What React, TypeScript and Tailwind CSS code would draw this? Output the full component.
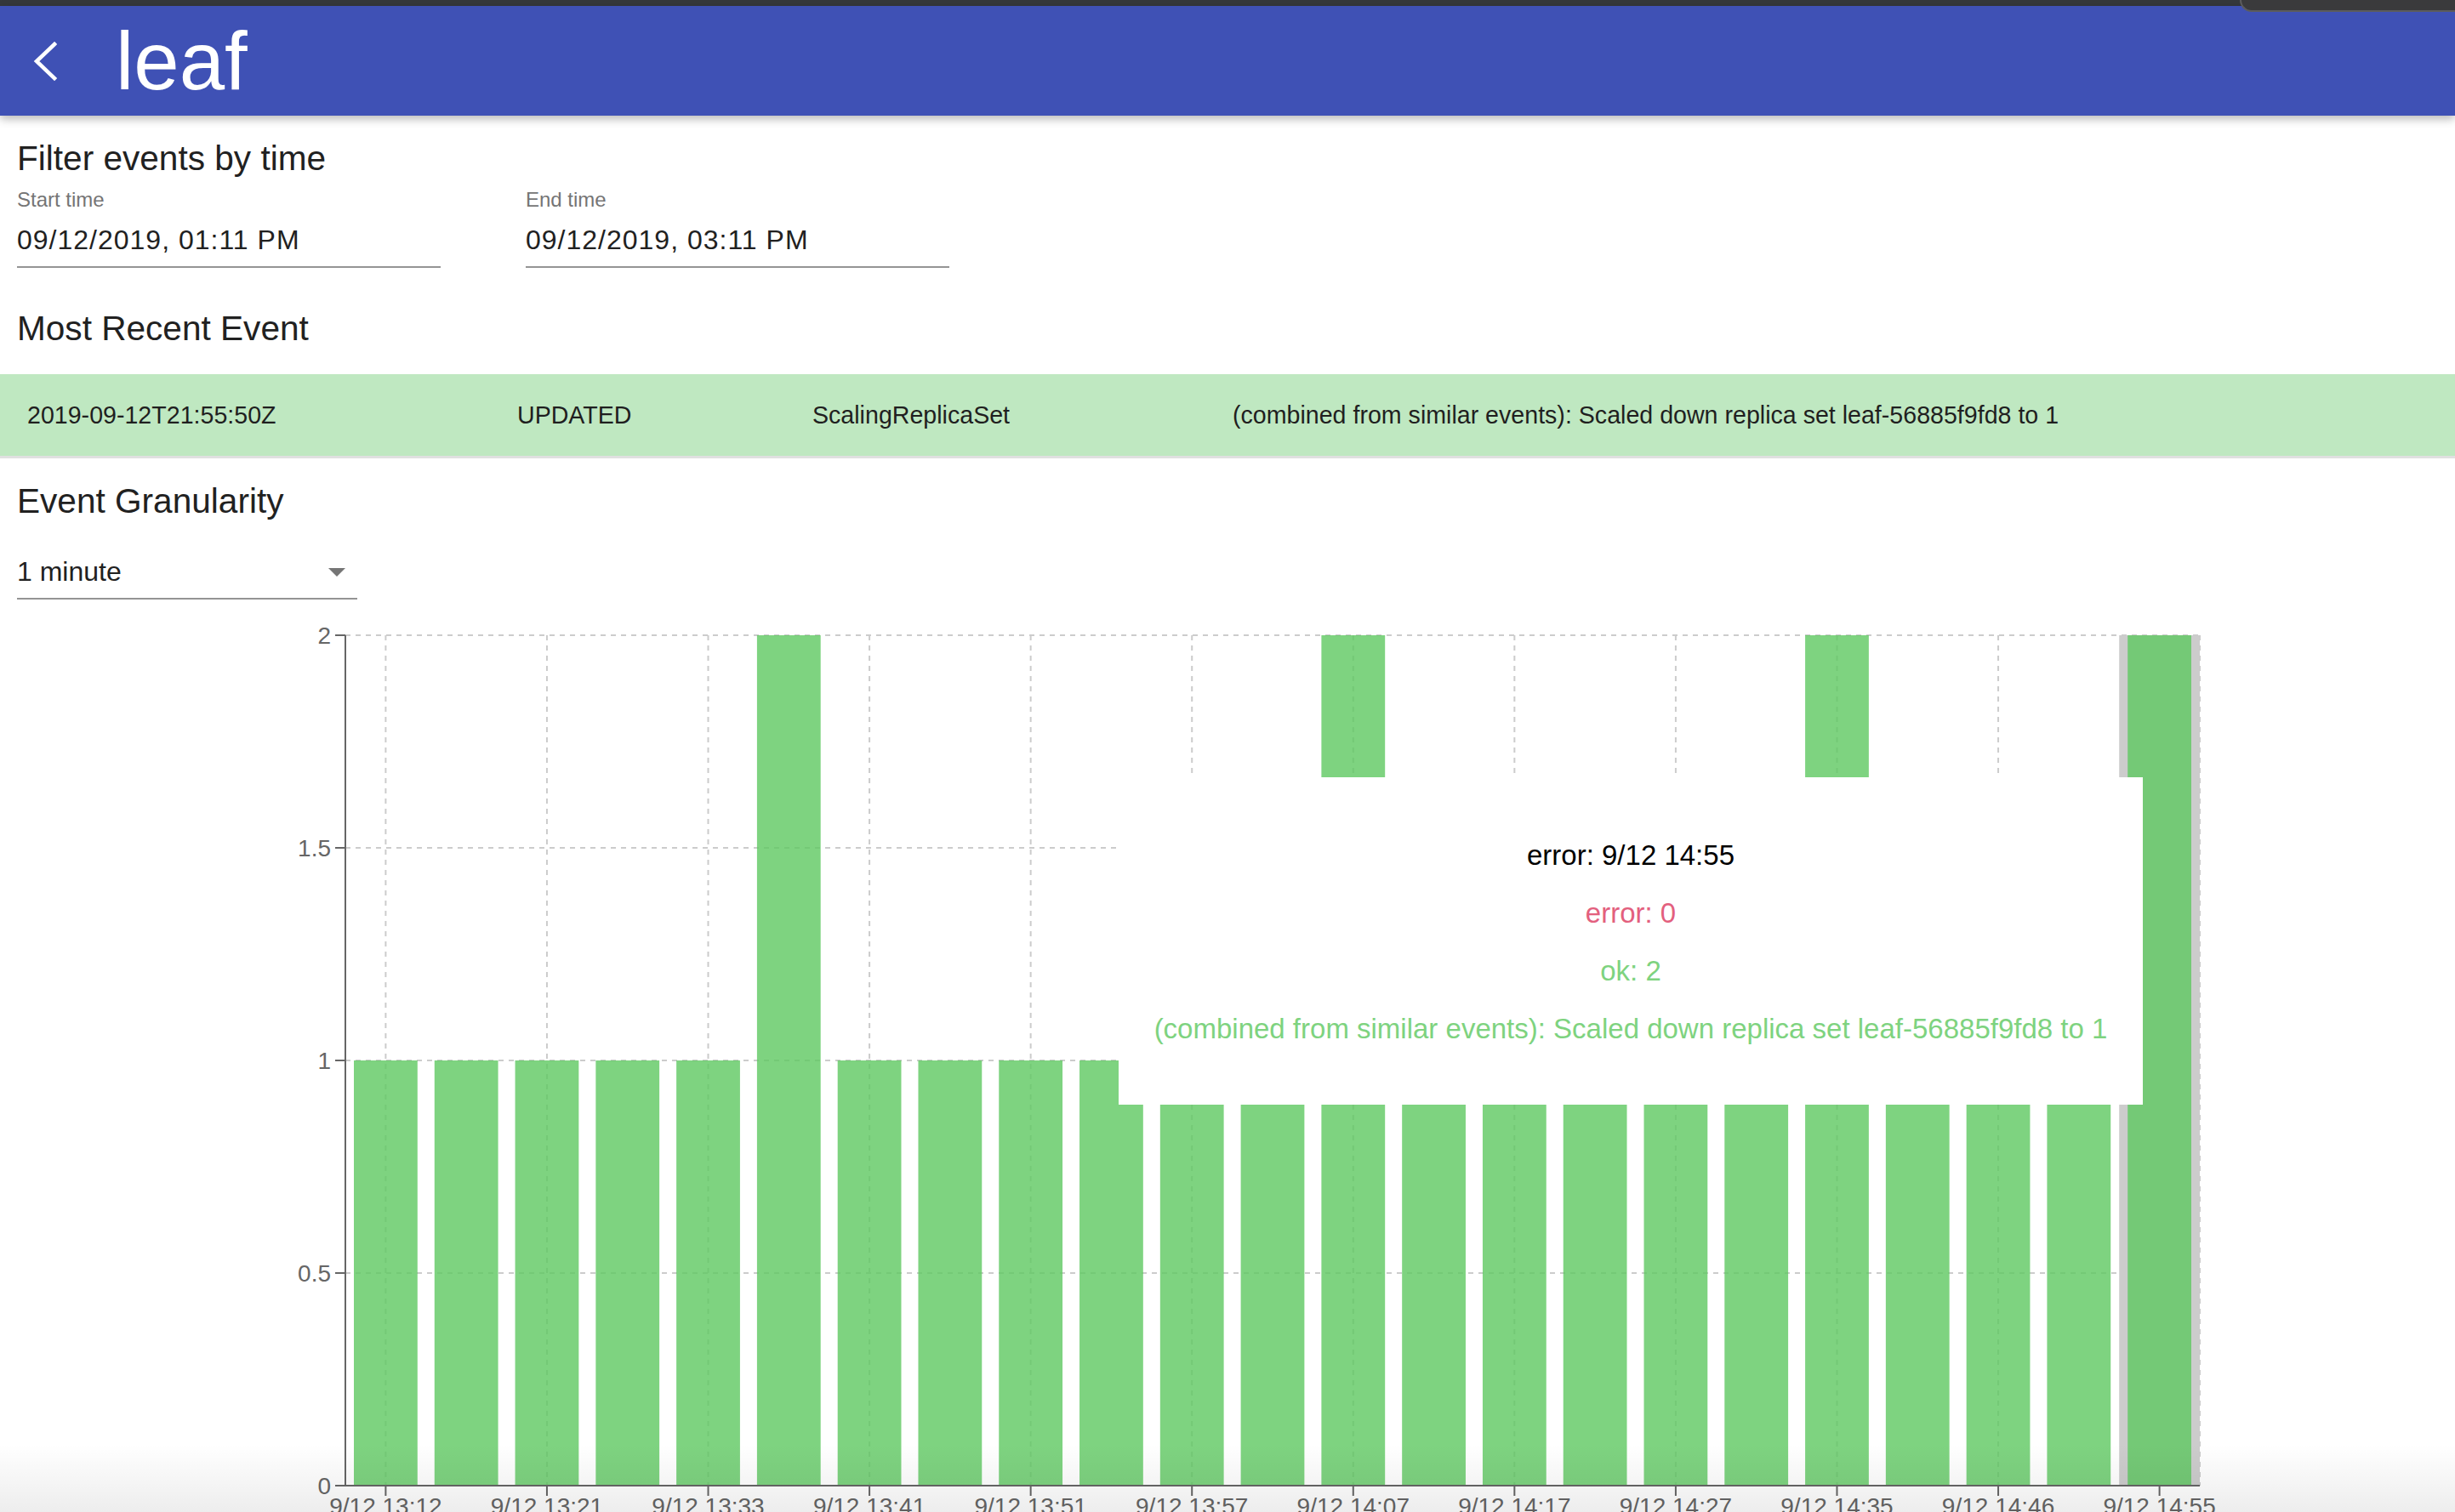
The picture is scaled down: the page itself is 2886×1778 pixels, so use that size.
const BAR_VALUES = [1, 1, 1, 1, 1, 2, 1, 1, 1, 1, 1, 1, 2, 1, 1, 1, 1, 1, 2, 1, 1, 1, 2]
const TICK_LABELS = [
  '9/12 13:12',
  '9/12 13:21',
  '9/12 13:33',
  '9/12 13:41',
  '9/12 13:51',
  '9/12 13:57',
  '9/12 14:07',
  '9/12 14:17',
  '9/12 14:27',
  '9/12 14:35',
  '9/12 14:46',
  '9/12 14:55',
]

// plot area in page coordinates (svg viewBox is offset to match)
const PLOT = { left: 406, right: 2586, top: 746, bottom: 1746 }
const BAND = (PLOT.right - PLOT.left) / BAR_VALUES.length
const ACTIVE = BAR_VALUES.length - 1
const yOf = (v: number) => PLOT.bottom - (v / 2) * (PLOT.bottom - PLOT.top)
const bandCenter = (i: number) => PLOT.left + i * BAND + BAND / 2

function EventChart() {
  const ticks = TICK_LABELS.map((label, k) => ({ label, x: bandCenter(k * 2) }))
  const yTicks = [0, 0.5, 1, 1.5, 2]

  return (
    <div className="relative mt-[12px] h-[1062px]">
      <svg width={2886} height={1062} viewBox="0 716 2886 1062" className="block">
        {/* cursor */}
        <rect x={PLOT.left + ACTIVE * BAND} y={PLOT.top} width={BAND} height={PLOT.bottom - PLOT.top} fill="#cccccc" />

        {/* grid */}
        {yTicks.slice(1).map((v) => (
          <line key={v} x1={PLOT.left} x2={PLOT.right} y1={yOf(v)} y2={yOf(v)} stroke="#cccccc" strokeWidth={2} strokeDasharray="6 6" />
        ))}
        {ticks.map((t) => (
          <line key={t.label} x1={t.x} x2={t.x} y1={PLOT.top} y2={PLOT.bottom} stroke="#cccccc" strokeWidth={2} strokeDasharray="6 6" />
        ))}
        <line x1={PLOT.right} x2={PLOT.right} y1={PLOT.top} y2={PLOT.bottom} stroke="#cccccc" strokeWidth={2} strokeDasharray="6 6" />

        {/* bars */}
        {BAR_VALUES.map((v, i) => (
          <rect
            key={i}
            x={PLOT.left + i * BAND + 10}
            y={yOf(v)}
            width={BAND - 20}
            height={PLOT.bottom - yOf(v)}
            fill="#5ec860"
            fillOpacity={0.8}
          />
        ))}

        {/* y axis */}
        <line x1={PLOT.left} x2={PLOT.left} y1={PLOT.top} y2={PLOT.bottom} stroke="#666666" strokeWidth={2} />
        {yTicks.map((v) => (
          <g key={v}>
            <line x1={PLOT.left - 12} x2={PLOT.left} y1={yOf(v)} y2={yOf(v)} stroke="#666666" strokeWidth={2} />
            <text
              x={PLOT.left - 17}
              y={yOf(v) + 10}
              textAnchor="end"
              fill="#666666"
              fontSize={28}
              fontFamily="'Liberation Sans', Arial, sans-serif"
            >
              {v}
            </text>
          </g>
        ))}

        {/* x axis */}
        <line x1={PLOT.left} x2={PLOT.right} y1={PLOT.bottom} y2={PLOT.bottom} stroke="#666666" strokeWidth={2} />
        {ticks.map((t) => (
          <g key={t.label}>
            <line x1={t.x} x2={t.x} y1={PLOT.bottom} y2={PLOT.bottom + 12} stroke="#666666" strokeWidth={2} />
            <text
              x={t.x}
              y={1780}
              textAnchor="middle"
              fill="#666666"
              fontSize={28}
              fontFamily="'Liberation Sans', Arial, sans-serif"
            >
              {t.label}
            </text>
          </g>
        ))}
      </svg>

      {/* tooltip */}
      <div className="absolute left-[1315px] top-[197px] h-[385px] w-[1204px] bg-white pt-[58px] text-center text-[33px] leading-[68px]">
        <p className="text-black">error: 9/12 14:55</p>
        <p className="text-[#e3607e]">error: 0</p>
        <p className="text-[#7ed37f]">ok: 2</p>
        <p className="text-[#7ed37f]">(combined from similar events): Scaled down replica set leaf-56885f9fd8 to 1</p>
      </div>
    </div>
  )
}

function TimeField({ label, value }: { label: string; value: string }) {
  return (
    <div className="w-[498px] border-b-2 border-[#949494] pb-[11px]">
      <div className="mt-[11px] text-[24px] leading-[28px] text-[#757575]">{label}</div>
      <div className="mt-[13px] text-[32px] leading-[40px] tracking-[1px] text-[#212121]">{value}</div>
    </div>
  )
}

export default function App() {
  return (
    <div className="relative h-[1778px] w-[2886px] overflow-hidden bg-white font-['Liberation_Sans',Arial,sans-serif]">
      <div className="h-[7px] bg-[#35383b]" />
      <div className="absolute right-0 top-0 z-20 h-[14px] w-[253px] rounded-bl-[14px] border-b-2 border-l-2 border-[#5c5c5e] bg-[#3a3a3c]" />

      <header className="relative z-10 flex h-[129px] items-center bg-[#3f51b5] text-white shadow-[0_4px_10px_rgba(0,0,0,0.28)]">
        <svg width="30" height="46" viewBox="0 0 30 46" className="ml-[38px]">
          <polyline points="26,3 5,23 26,43" fill="none" stroke="white" strokeWidth={4.5} strokeLinecap="square" />
        </svg>
        <h1 className="ml-[68px] text-[96px] leading-none">leaf</h1>
      </header>

      <main className="px-[20px]">
        <h2 className="mt-[26px] text-[40.6px] leading-[48px] text-[#212121]">Filter events by time</h2>
        <div className="flex gap-[100px]">
          <TimeField label="Start time" value="09/12/2019, 01:11 PM" />
          <TimeField label="End time" value="09/12/2019, 03:11 PM" />
        </div>

        <h2 className="mt-[47px] text-[40.6px] leading-[48px] text-[#212121]">Most Recent Event</h2>
      </main>

      <div className="mt-[30px] flex h-[99px] items-center border-b-[3px] border-[#e0e0e0] bg-[#bfe8c1] text-[28.6px] text-[#1f1f1f]">
        <div className="w-[608px] pl-[32px]">2019-09-12T21:55:50Z</div>
        <div className="w-[347px]">UPDATED</div>
        <div className="w-[494px]">ScalingReplicaSet</div>
        <div className="flex-1">(combined from similar events): Scaled down replica set leaf-56885f9fd8 to 1</div>
      </div>

      <section className="px-[20px]">
        <h2 className="mt-[26px] text-[40.6px] leading-[48px] text-[#212121]">Event Granularity</h2>
        <div className="mt-[35px] flex w-[400px] items-center justify-between border-b-2 border-[#949494] pb-[7px]">
          <span className="text-[32px] leading-[40px] text-[#212121]">1 minute</span>
          <svg width="48" height="48" viewBox="0 0 24 24">
            <path d="M7 10l5 5 5-5z" fill="#757575" />
          </svg>
        </div>
      </section>

      <EventChart />

      <div className="pointer-events-none absolute bottom-0 left-0 right-0 h-[80px] bg-linear-to-b from-transparent to-[rgba(0,0,0,0.07)]" />
    </div>
  )
}
